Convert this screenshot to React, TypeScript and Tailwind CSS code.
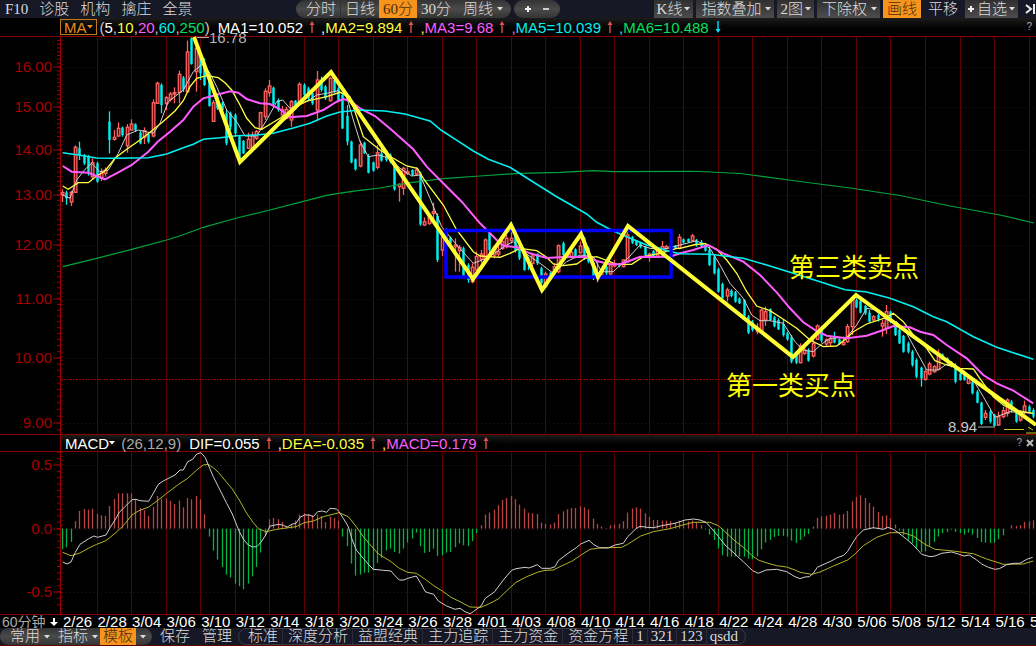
import React, { useState } from 'react';

const FIRST_X = 63;
const BAR_STEP = 4.315;
const GRID_STEP = BAR_STEP * 8;

// Bars are "direction high bodyTop bodyBottom low", three units to a pixel,
// measured down from the top of their segment.
const PRICE_SEGMENTS = [
  {
    top: 30,
    bars:
      'u478 488 494 516|d482 487 505 524|u482 487 516 528|u346 352 487 487|d335 355 375 390|d372 375 400 405|d375 378 425 437|u385 398 440 450|d395 400 455 458|u415 425 445 453|u412 420 430 440|d244 275 330 370|u300 322 328 332|u277 295 318 320|d290 293 315 320|u282 292 347 368|u268 282 300 302|d280 283 300 306|d303 308 340 343|u292 302 322 342|d308 312 335 340|u208 218 318 322|u155 160 220 222|d160 165 225 250|u198 203 220 240|u186 192 208 215|u172 188 192 220|u122 133 187 220|d138 143 178 186|u32 66 185 187|d22 25 102 104|u45 55 125 185|d75 80 130 150|d85 100 165 168|d140 150 228 230|u210 218 274 275|d190 200 235 240|d215 220 240 255|d240 250 340 346|d245 250 290 300|d250 255 310 320|d315 320 395 402|d330 333 370 372|u308 328 355 355|u305 315 352 352|u300 305 325 330|u245 248 298 300|u175 184 260 270|u150 168 188 200|d170 173 222 225|d205 210 240 245|u228 240 255 260|u230 238 265 268|u210 215 270 290|d210 212 232 240|u157 163 222 228|d160 165 195 200|d170 175 205 210|d182 190 220 225|u123 150 240 272|d140 150 180 185|d165 170 205 210|u140 145 212 215|d145 150 185 190|d170 175 210 215|d190 195 295 297|d225 258 335 346',
  },
  {
    top: 130,
    bars:
      'd32 35 97 100|d85 88 118 122|u32 45 108 112|d35 38 70 72|d72 78 128 130|d95 97 122 125|u45 68 112 118|d55 70 92 95|d60 70 90 95|d70 75 95 100|d95 100 178 182|u160 163 170 215|u110 115 175 195|u112 125 130 135|d118 120 135 138|u112 120 132 135|d125 130 283 287|u262 275 285 287|u250 258 280 285|u218 245 250 280|d250 258 390 396|u305 322 360 378|d295 300 340 345|d320 322 340 355|u325 345 350 425|u345 352 362 425|d350 355 438 440|d400 405 450 458|u400 412 455 460|u365 380 420 445|u360 372 388 400|u325 330 385 386|d305 310 360 370|u345 352 375 385|u345 365 372 382|u325 335 355 360|u315 325 350 355|u305 325 332 340|d315 318 362 368|d355 358 385 390|d360 362 420 422|d380 385 400 420|u370 378 400 410|d370 372 400 405|d410 415 460 485|u425 432 470 475|d425 430 440 445|u400 410 425 435|u343 347 425 430|d335 340 375 380|u362 368 380 385|u350 367 380 385|d355 358 380 385|u335 348 368 370|d320 325 385 390|d350 355 395 400|d395 400 445 450|u395 440 445 457|u415 420 435 440|d405 410 430 435|u395 400 432 435|u390 402 408 412|d400 402 408 412|u388 390 410 412|u300 315 395 398|d318 322 338 342|d330 332 345 348|d335 337 350 355|d348 350 375 382|u368 372 380 395|d360 363 378 380|u352 360 378 380|u333 350 375 378|u345 350 356 358|d343 346 358 362|d345 347 355 358|u312 322 355 358',
  },
  {
    top: 220,
    bars:
      'd55 58 68 70|d55 57 66 68|u42 48 62 65|d57 62 75 80|d60 65 78 82|d70 75 92 95|d78 90 135 138|d105 110 160 163|d143 148 215 218|d188 192 235 238|u203 210 228 245|d208 212 228 232|d213 217 245 248|d232 236 250 252|d238 240 288 290|d285 290 338 342|d300 305 330 335|u310 328 335 343|u266 270 332 335|u260 275 300 318|d265 268 300 302|d288 292 318 322|d295 300 328 330|d298 312 345 350|d335 340 358 362|d345 352 425 430|d395 398 428 432|u370 378 428 430|u378 390 400 405|d385 390 422 425|u350 370 408 412|u313 318 358 360|d318 330 362 368|u355 360 372 378|u350 357 368 378|d335 352 368 370|d355 358 372 374|u350 368 374 376|u312 320 365 368|u232 238 320 345|d235 240 262 265|d240 243 278 280|d255 258 280 285|d270 278 305 308|u285 290 300 302|d280 285 298 305|u300 310 318 350|u255 275 325 342|d272 275 305 310|d305 310 345 348|d325 330 370 372|d345 348 395 398|d365 370 395 400|d390 395 435 440|d415 420 470 475|d440 443 475 500|u448 455 478 482|u425 432 462 466|u435 440 455 458|u388 400 448 450|d400 403 418 420|d412 415 425 430|d423 427 440 442|d430 440 485 490|d455 460 480 482|d460 465 480 482|u465 475 490 493|d480 485 520 523|d510 515 548 550|d545 548 612 615|u570 580 592 600|d570 575 605 610|d582 585 618 620|u575 590 615 618|u560 572 590 595|u535 540 580 590|d540 545 570 578|d570 575 605 608|u570 580 600 605|u542 558 578 582|d555 560 575 580|d565 570 590 595',
  },
];

const candles = PRICE_SEGMENTS.flatMap(({ top, bars }) =>
  bars.split('|').map((bar) => {
    const [high, open, close, low] = bar
      .slice(1)
      .split(' ')
      .map((v) => top + Number(v) / 3);
    return { up: bar[0] === 'u', high, open, close, low };
  })
);

const HISTOGRAM = [
  -62, -56, -40, 22, 53, 59, 57, 60, 44, 40, 38, 68, 89, 106, 106, 106, 106, 88, 62, 55, 38, 65, 98, 90, 90, 83, 74, 84,
  64, 92, 88, 98, 88, 43, -24, -66, -93, -115, -138, -147, -165, -173, -182, -165, -143, -115, -72, -20, 28, 32, 28, 20,
  8, 14, 24, 42, 46, 44, 40, 42, 38, 20, 36, 32, 24, -24, -53, -105, -141, -138, -132, -132, -125, -103, -88, -66, -60,
  -70, -75, -60, -42, -30, -12, -53, -73, -70, -60, -82, -80, -72, -70, -56, -44, -50, -52, -38, -14, 10, 42, 48, 57, 70,
  86, 92, 98, 88, 72, 60, 48, 46, 44, 18, 14, 12, 18, 44, 52, 58, 62, 62, 67, 64, 58, 30, 14, 6, 2, 10, 12, 14, 22, 48,
  60, 64, 60, 46, 35, 26, 26, 24, 24, 22, 18, 24, 24, 22, 24, 18, 10, -2, -18, -34, -60, -80, -84, -84, -84, -84, -84,
  -90, -92, -84, -62, -42, -34, -25, -22, -22, -24, -36, -43, -34, -24, -16, 6, 32, 37, 38, 42, 47, 42, 44, 53, 82, 95,
  100, 92, 77, 66, 50, 38, 40, 31, 12, -6, -20, -35, -44, -60, -70, -68, -52, -40, -24, -14, -10, -3, -10, -14, -18, -12,
  -18, -28, -40, -42, -43, -43, -32, -20, 0, 10, 8, 10, 20, 22, 25,
];

// Moves a run of points (three units to a pixel) to its place on the chart
const run = (left: number, top: number, points: string) =>
  points
    .split(' ')
    .map((p) => {
      const [x, y] = p.split(',').map(Number);
      return `${(left + x / 3).toFixed(1)},${(top + y / 3).toFixed(1)}`;
    })
    .join(' ');

const AVERAGES = [
  {
    color: '#00a53c',
    width: 1.2,
    points: [
      run(60, 30, '8,710 110,685 215,658 320,630 365,616 430,592 530,564 630,540 730,514 800,496 850,488 900,481'),
      run(330, 130, '150,174 240,158 340,146 450,138 570,130 690,127 790,122 850,125 1080,124'),
      '700,171.5 740,173.5 800,181.5 850,188 900,195.5 950,206 1000,215 1034,223',
    ].join(' '),
  },
  {
    color: '#d0d0d0',
    width: 1,
    points: [
      run(60, 30, '8,495 30,505 50,450 75,418 95,400 120,425 145,420 175,370 200,315 235,300 280,310 300,280 325,215 370,180 400,125 430,100 450,130 470,170 500,240 530,275 555,318 590,318 620,270 650,215 668,210 690,235 740,215 770,195 800,190 835,182 860,200 880,270 900,335'),
      run(330, 130, '91,35 115,80 145,75 180,85 210,115 245,138 270,135 300,205 335,290 380,345 430,400 470,385 530,345 550,335 580,365 630,400 670,430 710,395 750,375 790,380 815,425 850,425 900,378 930,345 960,355 1000,358'),
      run(680, 220, '0,75 50,62 90,85 120,135 150,190 190,235 215,285 240,302 270,302 310,310 345,365 370,390 400,395 425,372 450,355 500,352 530,315 560,265 590,270 620,300 650,305 680,340 710,395 740,450 775,450 800,432 850,450 880,480 910,530 945,592 990,575 1060,580'),
    ].join(' '),
  },
  {
    color: '#ffff40',
    width: 1.3,
    points: [
      run(60, 30, '8,468 25,478 55,458 85,458 110,438 135,423 165,385 200,358 240,330 270,307 305,278 345,243 370,212 390,170 410,145 440,137 475,143 495,158 515,180 540,225 560,265 585,293 605,298 660,265 700,235 740,213 800,200 840,187 870,200'),
      run(330, 130, '100,20 150,60 190,85 230,108 262,115 280,145 340,225 380,300 430,365 450,378 510,382 540,370 570,355 620,362 650,382 670,402 700,407 740,402 765,385 800,380 835,393 860,403 905,403 940,380 990,370 1040,355'),
      run(680, 220, '0,85 40,75 75,70 110,88 140,120 170,160 200,215 230,258 270,272 310,298 350,325 390,360 430,380 470,378 500,355 520,335 560,312 620,292 640,280 670,305 700,345 740,385 765,422 800,435 840,445 880,447 910,490 940,530 970,555 1000,570 1060,580'),
    ].join(' '),
  },
  {
    color: '#ff5cff',
    width: 2,
    points: [
      run(60, 30, '8,408 35,425 85,428 135,448 175,427 215,405 265,365 293,335 330,305 370,270 400,230 430,205 460,197 510,184 535,188 560,207 600,220 630,222 660,238 690,262 740,258 790,240 830,215 850,207 870,213 900,235'),
      '375,116',
      run(330, 130, '185,0 250,58 290,110 350,170 395,215 450,280 500,330 520,347 560,352 600,370 650,384 700,381 740,381 775,380 800,393 840,403 870,403 900,392 930,380 970,381 1020,380'),
      run(680, 220, '0,100 40,90 85,75 130,100 190,125 240,165 290,217 330,265 370,307 410,333 440,347 500,355 560,347 610,330 640,318 690,322 720,335 760,345 800,375 860,415 910,465 950,490 1000,512 1060,550'),
    ].join(' '),
  },
  {
    color: '#00f0f0',
    width: 1.6,
    points: [
      run(60, 30, '8,368 60,376 110,384 160,385 265,383 320,372 370,353 400,343 430,328 480,323 530,317 590,315 640,310 700,294 750,280 800,258 840,246 900,240'),
      '385,111 405,114 430,121',
      run(330, 130, '333,0 390,37 430,63 475,88 540,112 600,150 680,200 770,252 800,277 850,303 890,320 950,345 990,355 1010,362'),
      run(680, 220, '0,101 90,103 190,115 260,135 330,157 420,185 495,209 560,216 630,235 700,260 760,290 800,305 880,350 950,382 1060,418'),
    ].join(' '),
  },
];

const DIF = [
  run(0, 425, '188,411 201,417 213,411 226,382 240,358 265,342 282,333 293,337 318,330 330,308 345,285 358,262 380,240 396,224 408,223 420,227 446,229 460,205 475,178 490,168 515,155 525,150 540,135 550,135 563,110 578,103 590,87 603,83 616,98 629,130 640,155 655,185 680,235 697,267 706,290 718,320 732,345 745,360 758,366 770,365 783,352 797,330 810,303 836,298 850,301 862,306 875,298 888,295 900,277 913,270 928,270 940,275 953,260 967,258 980,262 990,250 1010,252 1017,260 1030,280 1045,305 1055,340 1069,375 1090,400 1107,420 1120,433 1150,436 1173,438 1185,452 1198,465 1212,465 1223,460 1249,453 1262,475 1276,500 1290,505 1301,508 1315,528 1340,543 1365,553 1380,550 1395,560 1410,566 1420,560 1436,548'),
  run(480, 430, '3,528 16,505 44,485 70,450 95,421 108,416 135,412 147,414 172,404 185,415 211,415 225,410 235,392 264,370 289,353 302,342 327,331 340,343 358,353 385,354 405,345 430,340 443,320 468,296 480,289 500,292 520,293 545,287 585,280 615,270 640,267 660,270 678,277 690,290 712,315 735,345 765,372 790,395 818,422 835,430 858,420 890,418 920,425 945,440 960,446 975,441 988,440 1000,430 1012,412 1040,399'),
  run(740, 420, '272,424 290,414 311,406 323,394 336,372 350,350 370,330 400,323 430,328 443,322 460,328 475,338 500,358 520,375 545,403 570,410 585,408 605,400 635,396 655,402 672,408 688,405 710,420 725,432 745,442 764,448 778,446 800,434 820,430 840,430 860,418 878,412'),
].join(' ');

const DEA = [
  run(0, 425, '188,382 213,392 240,384 265,370 290,358 318,347 345,325 370,302 396,270 415,258 446,246 475,225 500,205 540,175 563,160 590,135 610,120 625,118 640,128 655,142 680,172 697,192 718,225 740,265 760,293 775,311 797,320 830,313 888,305 913,293 940,288 970,275 1017,263 1045,275 1065,300 1090,335 1107,355 1133,385 1173,410 1198,430 1223,442 1249,445 1276,463 1301,482 1327,498 1353,517 1380,530 1410,546 1436,547'),
  run(480, 430, '3,532 30,520 56,506 80,482 108,457 140,440 172,427 195,421 220,420 240,410 275,394 302,376 330,358 358,354 425,352 443,343 482,318 520,305 570,296 605,286 640,277 690,277 715,287 735,305 765,333 790,352 818,378 835,390 858,398 890,407 920,411 945,420 960,427 995,433 1020,426 1045,415'),
  run(740, 420, '280,438 323,420 345,402 370,377 410,352 450,338 490,338 520,348 555,373 585,388 640,393 700,401 740,417 790,433 850,432 880,423'),
].join(' ');

const DATES = [
  '2/26', '2/28', '3/04', '3/06', '3/10', '3/12', '3/14', '3/18', '3/20', '3/24', '3/26', '3/28', '4/01', '4/03',
  '4/08', '4/10', '4/14', '4/16', '4/18', '4/22', '4/24', '4/28', '4/30', '5/06', '5/08', '5/12', '5/14', '5/16',
];

const gridLines = Array.from({ length: 28 }, (_, i) => Math.round(FIRST_X + GRID_STEP * (i + 1)) - 0.5);

// The price axis is logarithmic
const priceY = (price: number) => 67 + 618.8 * Math.log(16 / price);
const priceTicks = Array.from({ length: 79 }, (_, i) => 8.9 + i / 10);
const macdTicks = Array.from({ length: 26 }, (_, i) => 528.5 + (i - 13) * 6.35);

function Caret() {
  return (
    <svg viewBox="0 0 6 4" className="h-1 w-1.5 shrink-0" aria-hidden="true">
      <path d="M0 0h6L3 3.5z" fill="currentColor" />
    </svg>
  );
}

function Arrow({ down = false }: { down?: boolean }) {
  return (
    <svg viewBox="0 0 6 12" className="mx-1.5 h-3 w-1.5 shrink-0" aria-hidden="true">
      {down ? (
        <path d="M2.3 0h1.4v8H5.5L3 12 .5 8h1.8z" fill="#00e5ff" />
      ) : (
        <path d="M2.3 12h1.4V4H5.5L3 0 .5 4h1.8z" fill="#e05050" />
      )}
    </svg>
  );
}

function Reading({ text, className, down, comma }: { text: string; className: string; down?: boolean; comma?: string }) {
  return (
    <span className={`flex items-center ${className}`}>
      {comma && <span className={comma}>,</span>}
      {text}
      <Arrow down={down} />
    </span>
  );
}

const PERIODS = ['分时', '日线', '60分', '30分', '周线'];

function TopBar() {
  const [period, setPeriod] = useState('60分');
  const menu = 'flex h-full items-center bg-linear-to-b from-[#303030] to-[#4c4c4c] pr-[3px]';

  return (
    <header className="flex h-[18px] items-center justify-between bg-[#161826]">
      <nav className="flex items-center gap-[11px] pr-2.5 pl-[5px]">
        {['F10', '诊股', '机构', '擒庄', '全景'].map((label) => (
          <button key={label} type="button">
            {label}
          </button>
        ))}
      </nav>

      <div className="flex h-full gap-[3px]">
        <div className="flex h-full overflow-hidden rounded-full bg-linear-to-b from-[#343434] via-[#4a4a4a] to-[#343434]">
          {PERIODS.map((label, i) => (
            <button
              key={label}
              type="button"
              onClick={() => setPeriod(label)}
              className={`flex items-center gap-1 ${
                i === 0 ? 'border-r border-[#333] pr-1 pl-2.5' : i === 4 ? 'px-2' : 'px-1'
              } ${period === label ? 'bg-[#f7941d] text-[#4a2c0a]' : ''}`}
            >
              {label}
              {i === 4 && <Caret />}
            </button>
          ))}
        </div>
        <div className="flex h-full w-[46px] items-center justify-center gap-2.5 rounded-full bg-linear-to-b from-[#343434] via-[#4a4a4a] to-[#343434]">
          <button type="button" aria-label="放大">
            <svg viewBox="0 0 8 8" className="size-2">
              <path d="M4 1v6M1 4h6" stroke="#eee" strokeWidth="2" />
            </svg>
          </button>
          <button type="button" aria-label="缩小">
            <svg viewBox="0 0 8 8" className="size-2">
              <path d="M1 4h6" stroke="#ccc" strokeWidth="2" />
            </svg>
          </button>
        </div>
      </div>

      <div className="flex h-full items-center gap-[3px]">
        <button type="button" className={`${menu} gap-0.5 pl-[3px]`}>K线<Caret /></button>
        <button type="button" className={`${menu} gap-1 pl-[5px]`}>指数叠加<Caret /></button>
        <button type="button" className={`${menu} gap-0.5 pl-[3px]`}>2图<Caret /></button>
        <button type="button" className={`${menu} gap-1 pl-[5px]`}>下除权<Caret /></button>
        <button type="button" className="h-full bg-[#f7941d] px-1 text-[#4a2c0a]">画线</button>
        <button type="button" className="px-1">平移</button>
        <button type="button" className={`${menu} gap-0.5 pl-0.5`}>
          <svg viewBox="0 0 8 8" className="size-2" aria-hidden="true">
            <path d="M4 1v6M1 4h6" stroke="#eee" strokeWidth="2" />
          </svg>
          自选
          <Caret />
        </button>
        <button type="button" aria-label="收起" className="pl-1">
          <svg viewBox="0 0 11 10" className="h-2.5 w-[11px]">
            <path d="M1 1l5 4-5 4M9 0v10" fill="none" stroke="#eee" strokeWidth="2" />
          </svg>
        </button>
      </div>
    </header>
  );
}

function Grid({ top, bottom }: { top: number; bottom: number }) {
  return (
    <g stroke="#5c0000" shapeRendering="crispEdges">
      {gridLines.map((x) => (
        <line key={x} x1={x} x2={x} y1={top} y2={bottom} />
      ))}
      <line x1="62.5" x2="62.5" y1={top} y2={bottom} strokeDasharray="1 3" />
      <line x1="60.5" x2="60.5" y1={top} y2={bottom} stroke="#a00000" />
    </g>
  );
}

function PriceChart() {
  return (
    <svg viewBox="0 36 1036 398" className="block h-auto w-full overflow-visible" role="img" aria-label="K线">
      <Grid top={36} bottom={434} />
      <line x1="0" x2="1036" y1="36.5" y2="36.5" stroke="#8c0000" shapeRendering="crispEdges" />
      {priceTicks.map((p) => (
        <line key={p} x1="57" x2="60" y1={priceY(p)} y2={priceY(p)} stroke="#a00000" />
      ))}
      {[16, 15, 14, 13, 12, 11, 10, 9].map((p) => {
        const y = Math.round(priceY(p));
        return (
          <g key={p}>
            <line x1="61" x2="1036" y1={y + 0.5} y2={y + 0.5} stroke="#5c0000" strokeDasharray="1 3" />
            <line x1="53" x2="60" y1={y} y2={y} stroke="#a00000" />
            <text x="52" y={y + 5} textAnchor="end" fontSize="15" fill="#a80000">
              {p.toFixed(2)}
            </text>
          </g>
        );
      })}
      <line x1="61" x2="1036" y1="379.5" y2="379.5" stroke="#980000" strokeDasharray="2 1" />

      {candles.map(({ up, high, open, close, low }, i) => {
        const x = Math.round(FIRST_X + BAR_STEP * i) - 0.5;
        return up ? (
          <g key={i} stroke="#ff6060" strokeWidth="1.3">
            <line x1={x} x2={x} y1={high} y2={low} />
            <rect x={x - 1.2} y={open} width="2.6" height={Math.max(close - open, 1)} fill="#601818" />
          </g>
        ) : (
          <g key={i} stroke="#00f0f0">
            <line x1={x} x2={x} y1={high} y2={low} strokeWidth="1.3" />
            <line x1={x} x2={x} y1={open} y2={close} strokeWidth="2.4" />
          </g>
        );
      })}

      {AVERAGES.map(({ color, width, points }) => (
        <polyline key={color} points={points} fill="none" stroke={color} strokeWidth={width} />
      ))}

      <rect x="446" y="230.5" width="225" height="46.5" fill="none" stroke="#0000ff" strokeWidth="3.5" />
      <polyline
        points="194,37 240,162 331,72 473,279 511,225 542,290 581,234 598,277 628,226 793,357 856,295 1036,425"
        fill="none"
        stroke="#ffff33"
        strokeWidth="4"
      />
      <path d="M1004 429.5h20M1028 427l5 3M1026 433h10" stroke="#c8c81e" />

      <path d="M197 37.5h12M978 427h17" stroke="#aaa" />
      <text x="209" y="43" fontSize="15" fill="#b4b4b4">16.78</text>
      <text x="948" y="432" fontSize="15" fill="#c8c8c8">8.94</text>
      <g fontSize="26" fill="#ffff00">
        <text x="789" y="277">第三类卖点</text>
        <text x="726" y="395">第一类买点</text>
      </g>
    </svg>
  );
}

function MacdChart() {
  return (
    <svg viewBox="0 452 1036 162" className="block h-auto w-full" role="img" aria-label="MACD">
      <Grid top={452} bottom={614} />
      {macdTicks.map((y) => (
        <line key={y} x1="57" x2="60" y1={y} y2={y} stroke="#a00000" />
      ))}
      {[
        ['0.5', 465],
        ['0.0', 529],
        ['-0.5', 592],
      ].map(([label, y]) => (
        <g key={label}>
          <line x1="61" x2="1036" y1={Number(y) + 0.5} y2={Number(y) + 0.5} stroke="#5c0000" strokeDasharray="1 3" />
          <line x1="53" x2="60" y1={y} y2={y} stroke="#a00000" />
          <text x="52" y={Number(y) + 5} textAnchor="end" fontSize="15" fill="#a80000">
            {label}
          </text>
        </g>
      ))}
      {HISTOGRAM.map((v, i) => {
        const x = Math.round(FIRST_X + BAR_STEP * i) - 0.5;
        return (
          <line
            key={i}
            x1={x}
            x2={x}
            y1="528.6"
            y2={528.6 - v / 3}
            stroke={v > 0 ? '#b84444' : '#00b448'}
            strokeWidth="1.3"
          />
        );
      })}
      <polyline points={DEA} fill="none" stroke="#b4b428" />
      <polyline points={DIF} fill="none" stroke="#cfcfcf" />
    </svg>
  );
}

function BottomBar() {
  const [template, setTemplate] = useState('标准');

  return (
    <footer className="flex h-[18px] items-center border-b border-[#5c0000] bg-[#161826]">
      <div className="flex h-full items-center overflow-hidden rounded-full bg-linear-to-b from-[#343434] via-[#4a4a4a] to-[#343434] pr-1.5">
        <button type="button" className="flex items-center gap-1 pr-2 pl-2.5">常用<Caret /></button>
        <button type="button" className="flex items-center gap-1 pr-0.5">指标<Caret /></button>
        <button type="button" className="flex h-full items-center gap-1">
          <span className="flex h-full items-center bg-[#f7941d] px-[3px] text-[#4a2c0a]">模板</span>
          <Caret />
        </button>
      </div>
      <button type="button" className="ml-2">保存</button>
      <button type="button" className="mr-1.5 ml-3">管理</button>
      <div className="flex h-full items-center rounded-full border border-[#3a3a46] px-1">
        {['标准', '深度分析', '益盟经典', '主力追踪', '主力资金', '资金方程', '1', '321', '123', 'qsdd'].map((label, i) => (
          <button
            key={label}
            type="button"
            aria-pressed={template === label}
            onClick={() => setTemplate(label)}
            className={`flex h-full items-center ${i > 0 ? 'border-l border-[#2c2c38]' : ''} ${
              i > 5 ? 'px-[3px]' : 'pr-1 pl-[5px]'
            }`}
          >
            {label}
          </button>
        ))}
      </div>
    </footer>
  );
}

export default function App() {
  const strip = 'ml-[60px] flex h-full items-center bg-linear-to-b from-[#1c1c1c] to-black';

  return (
    <div className="min-h-screen overflow-hidden bg-black font-['Liberation_Sans','Noto_Sans_CJK_SC',sans-serif] text-[15px] leading-none whitespace-nowrap text-white">
      <div className="font-['Liberation_Serif','Noto_Sans_CJK_SC',serif] font-light text-[#dcdcdc]">
        <TopBar />
      </div>

      <section className="h-[18px]">
        <div className={strip}>
          <button type="button" className="mr-[3px] flex h-4 items-center border border-[#c07818] px-[3px] text-[#e88c1e]">
            MA
            <Caret />
          </button>
          <span className="mr-2 text-[#c8c8c8]">
            (<span className="text-white">5</span>,<span className="text-[#ffff40]">10</span>,
            <span className="text-[#ff5cff]">20</span>,<span className="text-[#00f0f0]">60</span>,
            <span className="text-[#00e060]">250</span>)
          </span>
          <Reading text="MA1=10.052" className="text-white" />
          <Reading text="MA2=9.894" className="text-[#ffff40]" comma="text-white" />
          <Reading text="MA3=9.68" className="text-[#ff5cff]" comma="text-[#ffff40]" />
          <Reading text="MA5=10.039" className="text-[#00f0f0]" comma="text-[#ff5cff]" />
          <Reading text="MA6=10.488" className="text-[#00e060]" comma="text-[#00f0f0]" down />
          <button type="button" className="mr-1 ml-auto text-[10px] text-[#aaa]">?</button>
        </div>
      </section>
      <PriceChart />

      <section className="h-[18px] border-y border-[#8c0000]">
        <div className={`${strip} border-l border-[#a00000]`}>
          <button type="button" className="mr-1.5 ml-1 flex items-center">
            MACD
            <Caret />
          </button>
          <span className="mr-2 text-[#aaa]">(26,12,9)</span>
          <Reading text="DIF=0.055" className="text-white" />
          <Reading text="DEA=-0.035" className="text-[#ffff40]" comma="text-white" />
          <Reading text="MACD=0.179" className="text-[#ff5cff]" comma="text-[#ffff40]" />
          <button type="button" className="mr-1 ml-auto text-[10px] text-[#aaa]">?</button>
          <button type="button" aria-label="关闭" className="mr-0.5">
            <svg viewBox="0 0 8 8" className="size-2">
              <path d="M1 1l6 6M7 1L1 7" stroke="#bbb" strokeWidth="2" />
            </svg>
          </button>
        </div>
      </section>
      <MacdChart />

      <section className="flex h-[14px] items-center border-t border-[#8c0000]">
        <button type="button" className="flex w-[63px] shrink-0 items-center gap-1 pl-0.5 text-[14px] text-[#aaa]">
          60分钟
          <svg viewBox="0 0 8 8" className="size-2" aria-hidden="true">
            <path d="M3 0h2v4h3L4 8 0 4h3z" fill="#fff" />
          </svg>
        </button>
        <div className="grid flex-1 grid-cols-28">
          {DATES.map((date) => (
            <span key={date}>{date}</span>
          ))}
        </div>
        <span className="w-1.5 shrink-0">5/20</span>
      </section>
      <div className="font-['Liberation_Serif','Noto_Sans_CJK_SC',serif] font-light text-[#dcdcdc]">
        <BottomBar />
      </div>
    </div>
  );
}
